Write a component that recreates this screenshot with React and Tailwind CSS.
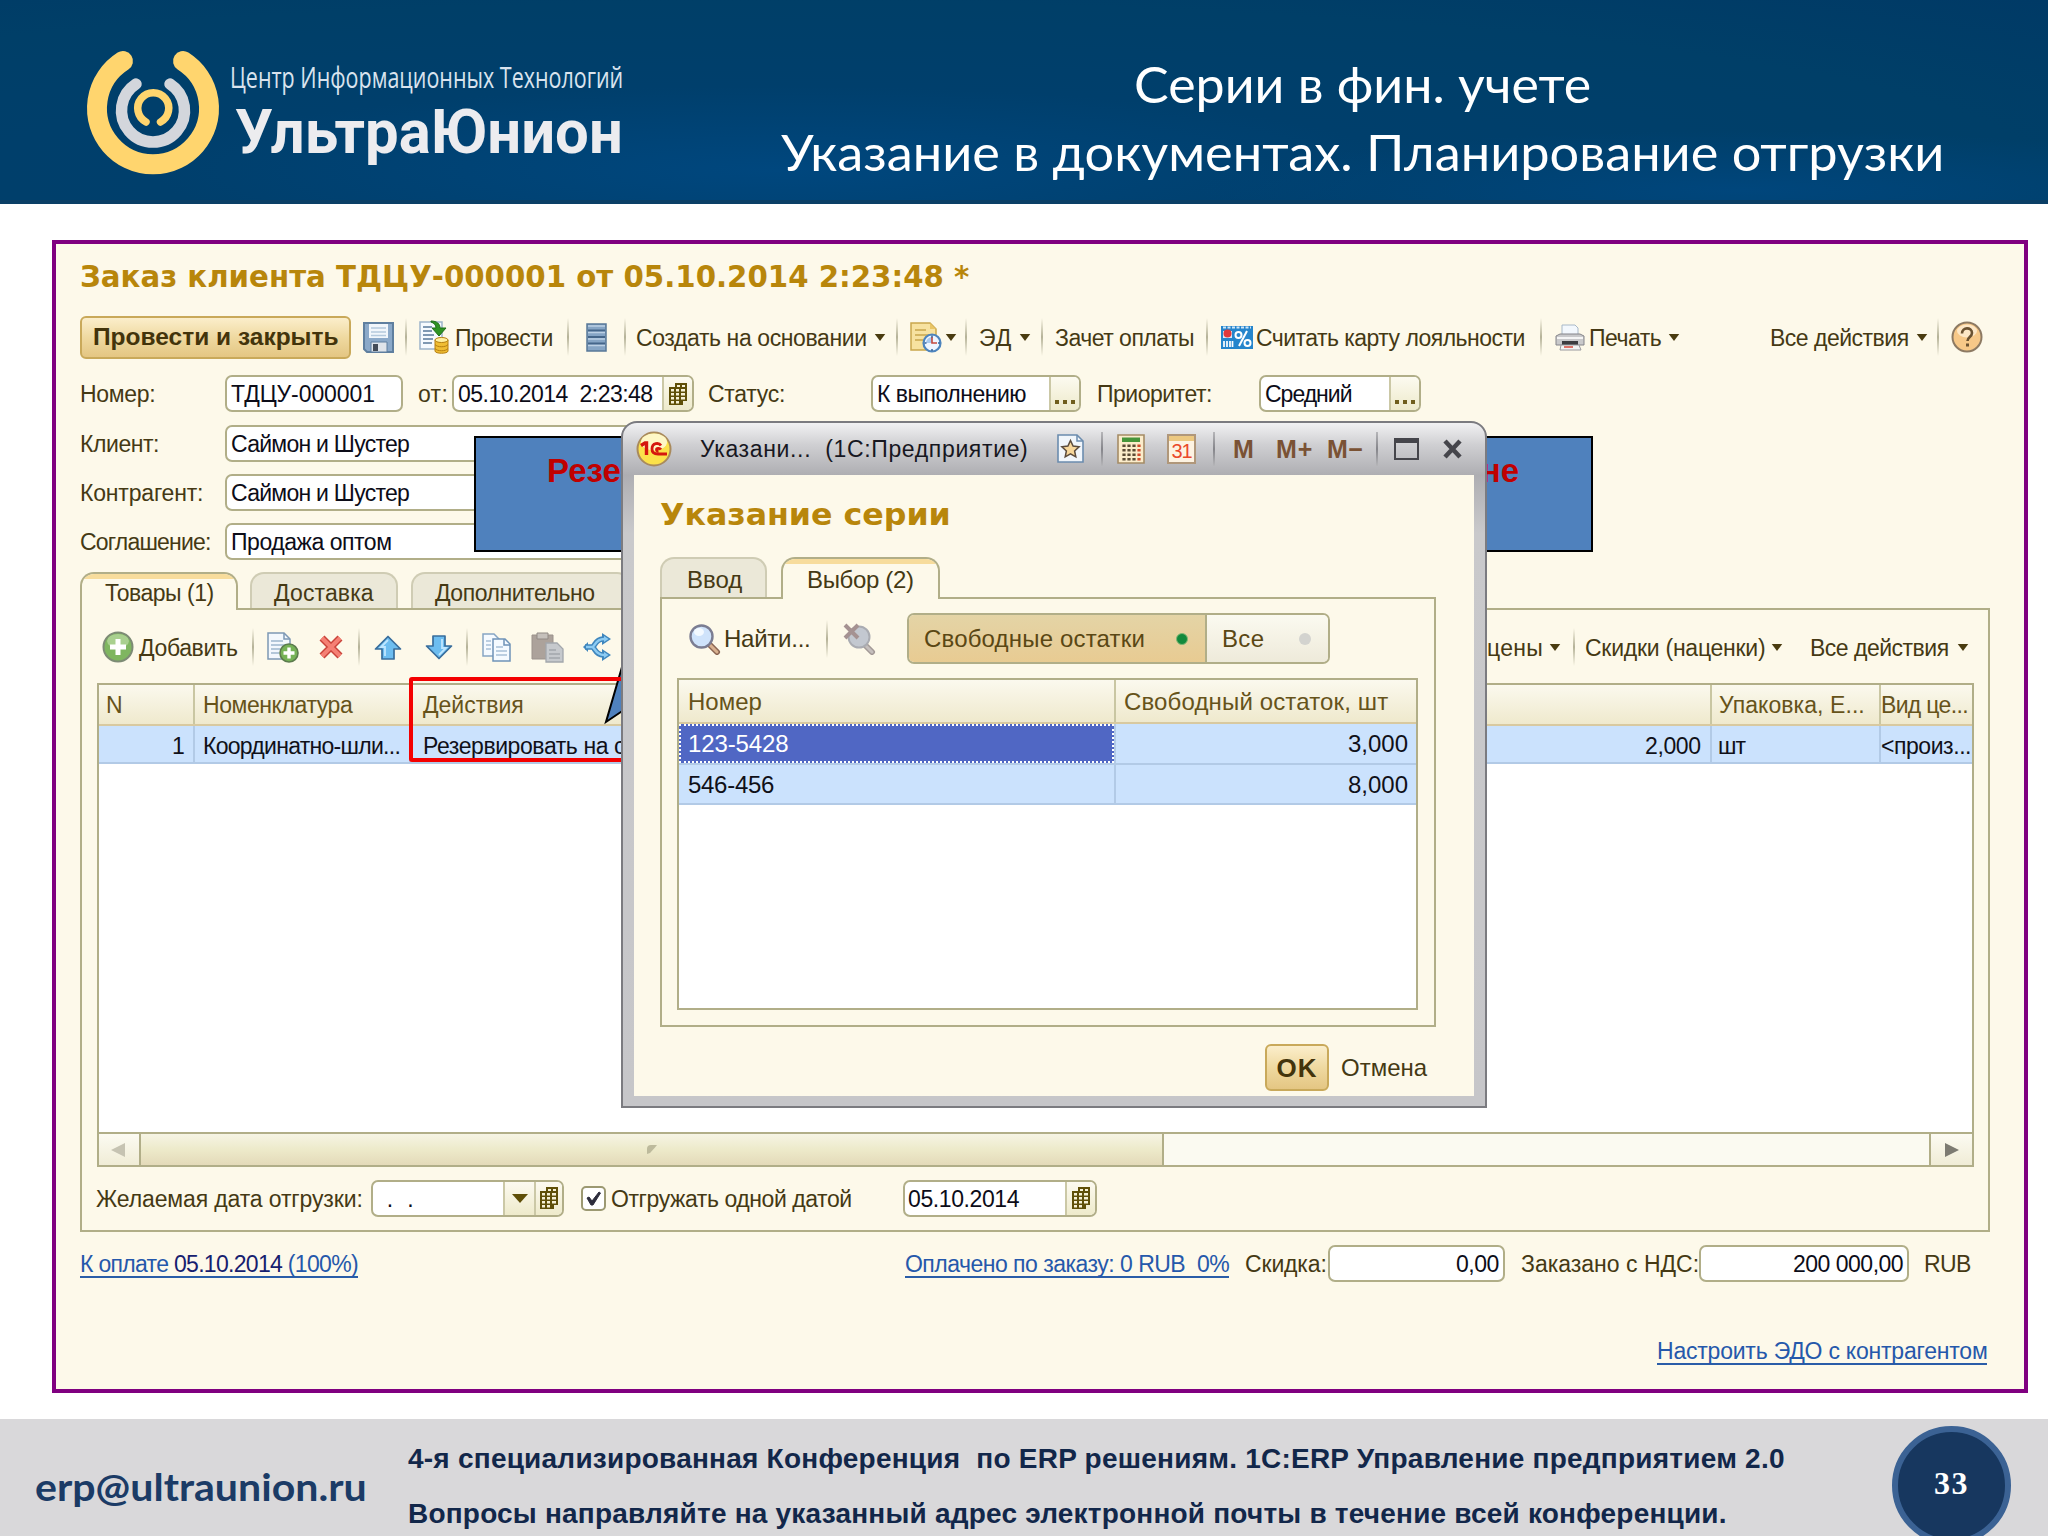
import { useLayoutEffect, useRef } from "react";

// One line of text that fills exactly `w` pixels, by tracking or by horizontal scaling
function T({ w, squeeze, className = "", children }) {
  const ref = useRef(null);

  useLayoutEffect(() => {
    const el = ref.current;
    el.style.letterSpacing = "0px";
    el.style.transform = "none";
    const natural = el.offsetWidth;
    if (squeeze) {
      el.style.transform = `scaleX(${w / natural})`;
    } else {
      el.style.letterSpacing = `${(w - natural) / el.textContent.length}px`;
    }
  }, [w, squeeze, children]);

  return (
    <span
      className={`block shrink-0 whitespace-pre ${squeeze ? "" : "pt-[1px]"} ${className}`}
      style={{ width: w }}
    >
      <span ref={ref} className="inline-block origin-left">
        {children}
      </span>
    </span>
  );
}

const Sep = ({ className = "" }) => (
  <span
    className={`block h-[38px] w-[2px] shrink-0 bg-gradient-to-b from-transparent via-[#b5b298] to-transparent ${className}`}
  />
);

const Caret = ({ className = "" }) => (
  <svg viewBox="0 0 12 8" className={`h-[7px] w-[12px] shrink-0 ${className}`}>
    <path d="M0 0h12L6 8z" fill="#4a3c10" />
  </svg>
);

const CalendarIcon = ({ className = "" }) => (
  <svg viewBox="0 0 20 24" className={`h-[24px] w-[20px] shrink-0 ${className}`}>
    <path d="M7 1h12v18h-4v4H1V5h6z" fill="#5f4f08" />
    <g fill="#f6f1d6">
      <path d="M9 3h3v2H9zM14 3h3v2h-3zM3 7h3v2.500H3zM8 7h3v2.500H8zM13 7h4v2.500h-4zM3 11h3v2.500H3zM8 11h3v2.500H8zM13 11h4v2.500h-4zM3 15h3v2.500H3zM8 15h3v2.500H8zM13 15h4v2.500h-4zM3 19h3v2.500H3zM8 19h3v2.500H8z" />
    </g>
  </svg>
);

function Field({ width, text, textW, button, right, indent = 4, className = "" }) {
  return (
    <div
      style={{ width }}
      className={`flex h-[37px] shrink-0 overflow-hidden rounded-[7px] border-2 border-[#b1ae88] bg-white text-[#0c0c18] ${className}`}
    >
      <div className={`flex flex-1 items-center ${right ? "justify-end pr-[4px]" : ""}`}>
        {!right && <span className="block shrink-0" style={{ width: indent }} />}
        <T w={textW}>{text}</T>
      </div>
      {button}
    </div>
  );
}

const FieldButton = ({ children, className = "w-[30px]" }) => (
  <div
    className={`flex shrink-0 items-center justify-center border-l-2 border-[#cbc8a6] bg-gradient-to-b from-[#fcfaf0] to-[#eeeacb] ${className}`}
  >
    {children}
  </div>
);

const Dots = () => (
  <span className="mt-[16px] flex gap-[4px]">
    <i className="block size-[4px] bg-[#6f5d1c]" />
    <i className="block size-[4px] bg-[#6f5d1c]" />
    <i className="block size-[4px] bg-[#6f5d1c]" />
  </span>
);

function Logo() {
  return (
    <svg viewBox="0 0 140 128" className="h-[128px] w-[140px] shrink-0" fill="none" strokeLinecap="round">
      <path d="M40 14A56 56 0 1 0 100 14" stroke="#ffd56e" strokeWidth="20" />
      <path d="M53 37A31.500 31.500 0 1 0 87 37" stroke="#d3d6dc" strokeWidth="11.500" />
      <path d="M63 75A15.500 15.500 0 1 1 77.500 75" stroke="#ffd56e" strokeWidth="7.500" />
    </svg>
  );
}

function Header() {
  return (
    <header className="flex h-[204px] shrink-0 border-b-4 border-[#0b3f66] bg-[radial-gradient(ellipse_at_85%_95%,#00467c_0%,#00467c00_22%),radial-gradient(ellipse_at_38%_85%,#00477e_0%,#003f6c_35%,#003f68_70%,#003a66_100%)]">
      <div className="ml-[83px] flex pt-[47px]">
        <Logo />
        <div className="ml-[7px] flex flex-col">
          <T w={393} squeeze className="mt-[9px] h-[42px] font-['Open_Sans','Noto_Sans',sans-serif] text-[30px] leading-[42px] text-[#d9e3ee]">
            Центр Информационных Технологий
          </T>
          <T w={388} squeeze className="ml-[5px] mt-[3px] h-[62px] font-['Roboto','Liberation_Sans',sans-serif] text-[62px] font-bold leading-[62px] text-[#ececef]">
            УльтраЮнион
          </T>
        </div>
      </div>
      <div className="ml-auto mr-[104px] flex flex-col items-center pt-[50px] font-['Lato','Open_Sans',sans-serif] text-[51px] leading-[68px] text-white">
        <T w={457} squeeze className="h-[68px]">Серии в фин. учете</T>
        <T w={1163} squeeze className="h-[68px]">Указание в документах. Планирование отгрузки</T>
      </div>
    </header>
  );
}

function SaveIcon() {
  return (
    <svg viewBox="0 0 31 31" className="ml-[12px] size-[31px] shrink-0">
      <path d="M1 1h29v29H4l-3-3z" fill="#8ba9c9" stroke="#5f7f9f" strokeWidth="2" />
      <path d="M6 2h19v14H6z" fill="#f1f6fb" />
      <path d="M8 6h15M8 10h15M8 13.500h15" stroke="#b4c9dd" strokeWidth="1.500" />
      <path d="M8 20h16v10H8z" fill="#dfe4ea" stroke="#5f7f9f" />
      <path d="M10 22h5v7h-5z" fill="#444c57" />
    </svg>
  );
}

function PostIcon() {
  return (
    <svg viewBox="0 0 31 34" className="ml-[12px] h-[34px] w-[31px] shrink-0">
      <path d="M1 2h22v27H1z" fill="#f6fafe" stroke="#9db4ca" strokeWidth="1.500" />
      <path d="M4 7h9M4 11h9M4 15h11M4 19h10M4 23h9" stroke="#7f98b2" strokeWidth="1.800" />
      <path d="M12 1c6 0 9 3 9 7h6l-7 8-7-8h4c0-3-2-5-5-6z" fill="#2f9423" stroke="#1f6e18" />
      <path d="M16 20v11c0 3 13 3 13 0V20z" fill="#f0bd33" stroke="#b67f10" />
      <ellipse cx="22.500" cy="20" rx="6.500" ry="2.500" fill="#fff0a0" stroke="#b67f10" />
      <path d="M16 24.500c2 3 11 3 13 0M16 28.500c2 3 11 3 13 0" stroke="#b67f10" fill="none" />
    </svg>
  );
}

function ListIcon() {
  return (
    <svg viewBox="0 0 21 29" className="ml-[17px] h-[29px] w-[21px] shrink-0">
      <path d="M1 1h19v27H1z" fill="#86a5c5" stroke="#587898" strokeWidth="1.500" />
      <path d="M2 7.500h17M2 14h17M2 20.500h17" stroke="#45668a" strokeWidth="1.800" />
      <path d="M2 3h17M2 9.500h17M2 16h17M2 22.500h17" stroke="#bcd0e4" strokeWidth="1.500" />
    </svg>
  );
}

function NoteClockIcon() {
  return (
    <svg viewBox="0 0 32 31" className="ml-[12px] h-[31px] w-[32px] shrink-0">
      <path d="M1 1h19l6 6v21H1z" fill="#f7e2a0" stroke="#c9a64c" strokeWidth="1.500" />
      <path d="M20 1v6h6z" fill="#e9c566" />
      <path d="M5 8h11M5 13h14M5 18h8" stroke="#c9a64c" strokeWidth="1.500" />
      <circle cx="22" cy="21" r="8.500" fill="#eef5ff" stroke="#4d84bd" strokeWidth="2.200" />
      <path d="M22 21V15a6 6 0 0 0-6 6z" fill="#a9c9ee" />
      <path d="M22 15v6h5" stroke="#c5493e" strokeWidth="1.600" fill="none" />
      <path d="M22 13.500v2M22 27v2M14.500 21h2M28 21h2" stroke="#31609a" strokeWidth="1.500" />
    </svg>
  );
}

function LoyaltyIcon() {
  return (
    <svg viewBox="0 0 32 23" className="ml-[13px] h-[23px] w-[32px] shrink-0">
      <path d="M0 0h32v23H0z" fill="#2585cc" />
      <path d="M2 1.500h28" stroke="#cfe6f8" strokeWidth="2" strokeDasharray="3 1.500" />
      <path d="M2 5h9v7H2z" fill="#dfeaf6" />
      <circle cx="6.500" cy="7.500" r="4" fill="#e0383b" />
      <path d="M3 15v6M6 15v6M9 15v6M11.500 15v6" stroke="#fff" strokeWidth="1.700" />
      <circle cx="17.500" cy="9" r="3" fill="none" stroke="#fff" strokeWidth="2" />
      <circle cx="26.500" cy="17" r="3" fill="none" stroke="#fff" strokeWidth="2" />
      <path d="M26 5l-8 15" stroke="#fff" strokeWidth="2" />
    </svg>
  );
}

function PrinterIcon() {
  return (
    <svg viewBox="0 0 30 27" className="ml-[13px] h-[27px] w-[30px] shrink-0">
      <path d="M7 1h13l3 3v9H7z" fill="#f3f8fd" stroke="#a8b8c8" />
      <path d="M1 12l4-2h20l4 2v9H1z" fill="#c9c9cb" stroke="#85858a" />
      <path d="M2 14h26" stroke="#f5f5f5" strokeWidth="2" />
      <path d="M7 17h16v4H7z" fill="#3c3c40" />
      <path d="M6 21h18l2 5H5z" fill="#f4f4f4" stroke="#9a9a9e" />
      <path d="M9 23h9" stroke="#d8483b" strokeWidth="1.500" />
    </svg>
  );
}

function MainToolbar() {
  return (
    <div className="flex h-[58px] items-center text-[#453914]">
      <div className="flex h-[43px] w-[271px] shrink-0 items-center rounded-[6px] border-2 border-[#c9a95a] bg-gradient-to-b from-[#fbeecb] via-[#efd9a0] to-[#e4c683] text-[#43340b]">
        <T w={246} squeeze className="ml-[11px] font-bold">Провести и закрыть</T>
      </div>
      <SaveIcon />
      <Sep className="ml-[11px]" />
      <PostIcon />
      <T w={98} className="ml-[5px]">Провести</T>
      <Sep className="ml-[14px]" />
      <ListIcon />
      <Sep className="ml-[17px]" />
      <T w={231} className="ml-[10px]">Создать на основании</T>
      <Caret className="ml-[7px]" />
      <Sep className="ml-[10px]" />
      <NoteClockIcon />
      <Caret className="ml-[3px]" />
      <Sep className="ml-[8px]" />
      <T w={33} className="ml-[12px]">ЭД</T>
      <Caret className="ml-[7px]" />
      <Sep className="ml-[10px]" />
      <T w={139} className="ml-[12px]">Зачет оплаты</T>
      <Sep className="ml-[12px]" />
      <LoyaltyIcon />
      <T w={269} className="ml-[3px]">Считать карту лояльности</T>
      <Sep className="ml-[15px]" />
      <PrinterIcon />
      <T w={72} className="ml-[4px]">Печать</T>
      <Caret className="ml-[7px]" />
      <T w={139} className="ml-auto">Все действия</T>
      <Caret className="ml-[7px]" />
      <Sep className="ml-[9px]" />
      <svg viewBox="0 0 32 32" className="ml-[12px] mr-[24px] size-[32px] shrink-0">
        <circle cx="16" cy="16" r="14.500" fill="#f7c888" stroke="#8d7a63" strokeWidth="2" />
        <ellipse cx="16" cy="10" rx="10" ry="6.500" fill="#fde7c6" />
        <path d="M11 12.500c0-7 10-6.500 10-.5 0 4-4.500 4-4.500 8" stroke="#6b5231" strokeWidth="2.600" fill="none" />
        <path d="M15 22.500h3v3h-3z" fill="#6b5231" />
      </svg>
    </div>
  );
}

function FormRows() {
  const rows = [
    { label: "Клиент:", w: 79, value: "Саймон и Шустер", vw: 178 },
    { label: "Контрагент:", w: 123, value: "Саймон и Шустер", vw: 178 },
    { label: "Соглашение:", w: 130, value: "Продажа оптом", vw: 161 },
  ];

  return (
    <div className="mt-[3px] text-[#453914]">
      <div className="flex h-[49px] items-center">
        <div className="w-[145px] shrink-0">
          <T w={75}>Номер:</T>
        </div>
        <Field width={178} text="ТДЦУ-000001" textW={144} />
        <T w={30} className="ml-[15px]">от:</T>
        <Field
          width={242}
          text="05.10.2014  2:23:48"
          textW={195}
          className="ml-[4px]"
          button={<FieldButton><CalendarIcon /></FieldButton>}
        />
        <T w={77} className="ml-[14px]">Статус:</T>
        <Field
          width={210}
          text="К выполнению"
          textW={149}
          className="ml-[86px]"
          button={<FieldButton><Dots /></FieldButton>}
        />
        <T w={115} className="ml-[16px]">Приоритет:</T>
        <Field
          width={162}
          text="Средний"
          textW={87}
          className="ml-[47px]"
          button={<FieldButton><Dots /></FieldButton>}
        />
      </div>
      {rows.map((row) => (
        <div key={row.label} className="flex h-[49px] items-center pt-[1px]">
          <div className="w-[145px] shrink-0">
            <T w={row.w}>{row.label}</T>
          </div>
          <Field width={1195} text={row.value} textW={row.vw} />
        </div>
      ))}
    </div>
  );
}

function Tab({ active, width, textW, pad, className = "", children }) {
  return (
    <div
      style={{ width, paddingLeft: pad }}
      className={`relative flex shrink-0 items-center overflow-hidden rounded-t-[14px] border-2 border-b-0 ${
        active
          ? "z-10 border-[#b1ae88] bg-[#fdf9ea] text-[#453914]"
          : "mb-[2px] border-[#cfccb4] bg-[#ebe8d8] pt-[2px] text-[#453914]"
      } ${className}`}
    >
      {active && <span className="absolute inset-x-0 top-0 h-[5px] bg-[#f7dc9c]" />}
      <T w={textW}>{children}</T>
    </div>
  );
}

function AddIcon() {
  return (
    <svg viewBox="0 0 32 32" className="size-[32px] shrink-0">
      <circle cx="16" cy="16" r="14.500" fill="#7fb660" stroke="#7d8b75" strokeWidth="2" />
      <ellipse cx="16" cy="10" rx="11" ry="7" fill="#a9d08f" />
      <path d="M16 8v16M8 16h16" stroke="#fff" strokeWidth="5" />
    </svg>
  );
}

function DocAddIcon() {
  return (
    <svg viewBox="0 0 32 31" className="ml-[13px] h-[31px] w-[32px] shrink-0">
      <path d="M1 1h16l6 6v20H1z" fill="#f3f8fd" stroke="#7d98b4" strokeWidth="1.500" />
      <path d="M17 1v6h6" fill="none" stroke="#7d98b4" strokeWidth="1.500" />
      <path d="M4 9h12M4 13h14M4 17h9M4 21h8" stroke="#9fb6cd" strokeWidth="1.600" />
      <circle cx="22" cy="21" r="9" fill="#76b257" stroke="#5b7b4d" strokeWidth="1.600" />
      <path d="M22 15.500v11M16.500 21h11" stroke="#fff" strokeWidth="3.400" />
    </svg>
  );
}

function ArrowIcon({ down, className }) {
  return (
    <svg viewBox="0 0 28 25" className={`h-[25px] w-[28px] shrink-0 ${down ? "rotate-180" : ""} ${className}`}>
      <path d="M14 1.500L26.500 14H20v10H8V14H1.500z" fill="#6dbdf0" stroke="#386d9c" strokeWidth="1.700" strokeLinejoin="round" />
      <path d="M14 5l-7 7h4v9" fill="none" stroke="#bfe6ff" strokeWidth="1.800" />
    </svg>
  );
}

function CopyIcon() {
  return (
    <svg viewBox="0 0 29 29" className="ml-[14px] size-[29px] shrink-0">
      <path d="M1 1h11l5 5v17H1z" fill="#f5faff" stroke="#86a5c4" strokeWidth="1.500" />
      <path d="M4 8h5M4 12h5M4 16h5" stroke="#a8c0d8" strokeWidth="1.500" />
      <path d="M11 6h12l5 5v17H11z" fill="#f5faff" stroke="#6f93b8" strokeWidth="1.500" />
      <path d="M22 6v6h6" fill="none" stroke="#6f93b8" strokeWidth="1.500" />
      <path d="M14 14h7M14 18h11M14 22h11" stroke="#a8c0d8" strokeWidth="1.600" />
    </svg>
  );
}

function PasteIcon() {
  return (
    <svg viewBox="0 0 33 31" className="ml-[20px] h-[31px] w-[33px] shrink-0">
      <path d="M1 3h21v24H1z" fill="#aca29b" stroke="#9b928c" />
      <path d="M6 1h11v6H6z" fill="#c5c0bb" stroke="#918a85" />
      <path d="M15 11h11l6 6v13H15z" fill="#c6c9cd" stroke="#a3a7ac" strokeWidth="1.300" />
      <path d="M18 18h7M18 22h11M18 26h11" stroke="#a3a7ac" strokeWidth="1.500" />
    </svg>
  );
}

function ShareIcon() {
  return (
    <svg viewBox="0 0 29 28" className="ml-[19px] h-[28px] w-[29px] shrink-0" fill="none">
      <path d="M2 14h7C12 14 12 6 20 6M9 14c3 0 3 8 11 8" stroke="#3f86bd" strokeWidth="5.500" />
      <path d="M19 0l9 6-9 6zM19 16l9 6-9 6zM0 14l5-5v10z" fill="#3f86bd" />
      <path d="M3 14h6C12 14 12 6 21 6M9 14c3 0 3 8 12 8" stroke="#8ccbf3" strokeWidth="2.500" />
      <path d="M21 3l4.500 3L21 9zM21 19l4.500 3-4.500 3z" fill="#8ccbf3" />
    </svg>
  );
}

function GoodsToolbar() {
  return (
    <div className="flex h-[73px] items-center pl-[20px] pt-[1px] text-[#453914]">
      <AddIcon />
      <T w={99} className="ml-[5px]">Добавить</T>
      <Sep className="ml-[14px]" />
      <DocAddIcon />
      <svg viewBox="0 0 24 24" className="ml-[20px] size-[24px] shrink-0">
        <path d="M3 3l18 18M21 3L3 21" stroke="#c9433a" strokeWidth="7" />
        <path d="M3 3l18 18M21 3L3 21" stroke="#f58074" strokeWidth="4" />
      </svg>
      <Sep className="ml-[15px]" />
      <ArrowIcon className="ml-[14px]" />
      <ArrowIcon down className="ml-[23px]" />
      <Sep className="ml-[13px]" />
      <CopyIcon />
      <PasteIcon />
      <ShareIcon />
      <div className="ml-auto mr-[19px] flex items-center">
        <T w={56}>цены</T>
        <Caret className="ml-[6px]" />
        <Sep className="ml-[12px]" />
        <T w={180} className="ml-[10px]">Скидки (наценки)</T>
        <Caret className="ml-[6px]" />
        <T w={139} className="ml-[27px]">Все действия</T>
        <Caret className="ml-[8px]" />
      </div>
    </div>
  );
}

const headCell = "flex items-center border-r-2 border-[#c9c6a2] last:border-r-0 overflow-hidden shrink-0";
const bodyCell = "flex items-center border-r-2 border-[#b2cae6] last:border-r-0 overflow-hidden shrink-0";

function GoodsTable() {
  return (
    <div className="ml-[15px] flex h-[484px] w-[1877px] flex-col border-2 border-[#b1ae88] bg-white">
      <div className="flex h-[41px] border-b-2 border-[#d8c9a0] bg-gradient-to-b from-[#fbf9ee] to-[#efe9cd] text-[#66531a]">
        <div className={`w-[96px] pl-[7px] ${headCell}`}><T w={16}>N</T></div>
        <div className={`w-[216px] pl-[8px] ${headCell}`}><T w={149}>Номенклатура</T></div>
        <div className={`w-[1301px] pl-[12px] ${headCell}`}><T w={101}>Действия</T></div>
        <div className={`w-[169px] pl-[7px] ${headCell}`}><T w={146}>Упаковка, Е...</T></div>
        <div className={`flex-1 ${headCell}`}><T w={87}>Вид це...</T></div>
      </div>
      <div className="flex h-[38px] border-b-2 border-[#b2cae6] bg-[#cbe2fd] text-[#101018]">
        <div className={`w-[96px] justify-end pr-[8px] pt-[2px] ${bodyCell}`}><T w={13}>1</T></div>
        <div className={`w-[216px] pl-[8px] pt-[2px] ${bodyCell}`}><T w={197}>Координатно-шли...</T></div>
        <div className={`w-[1301px] justify-between pl-[12px] pr-[9px] pt-[2px] ${bodyCell}`}>
          <T w={212}>Резервировать на ск</T>
          <T w={56}>2,000</T>
        </div>
        <div className={`w-[169px] pl-[6px] pt-[2px] ${bodyCell}`}><T w={27}>шт</T></div>
        <div className={`flex-1 pt-[2px] ${bodyCell}`}><T w={90}>{"<произ..."}</T></div>
      </div>
      <div className="mt-auto flex h-[33px] border-t-2 border-[#b1ae88] bg-[#fbfaf1]">
        <div className="flex w-[42px] items-center justify-center border-r-2 border-[#b1ae88] bg-gradient-to-b from-[#fcfbf2] to-[#f0ecd6] pr-[3px]">
          <svg viewBox="0 0 14 14" className="size-[14px]"><path d="M14 0v14L0 7z" fill="#c6c3b2" /></svg>
        </div>
        <div className="flex w-[1023px] items-center justify-center border-r-2 border-[#b1ae88] bg-gradient-to-b from-[#f6f4e4] via-[#edeaca] to-[#e4dab9]">
          <svg viewBox="0 0 10 10" className="size-[10px]">
            <path d="M0 9V4a4 4 0 0 1 4-4h6L8 2.500 3 8z" fill="#bdba9c" />
          </svg>
        </div>
        <div className="flex-1" />
        <div className="flex w-[43px] items-center justify-center border-l-2 border-[#b1ae88] bg-gradient-to-b from-[#fcfbf2] to-[#f0ecd6]">
          <svg viewBox="0 0 14 14" className="size-[14px]"><path d="M0 0v14l14-7z" fill="#7d7b72" /></svg>
        </div>
      </div>
    </div>
  );
}

function ShippingRow() {
  return (
    <div className="flex h-[62px] items-center pl-[14px] text-[#453914]">
      <T w={267}>Желаемая дата отгрузки:</T>
      <Field
        width={193}
        text=" .  ."
        textW={34}
        indent={7}
        className="ml-[8px]"
        button={
          <>
            <FieldButton className="w-[31px]">
              <svg viewBox="0 0 16 9" className="h-[9px] w-[16px]"><path d="M0 0h16L8 9z" fill="#5f4f08" /></svg>
            </FieldButton>
            <FieldButton className="w-[28px]"><CalendarIcon /></FieldButton>
          </>
        }
      />
      <svg viewBox="0 0 25 25" className="ml-[17px] size-[25px] shrink-0">
        <rect x="1" y="1" width="23" height="23" rx="4" fill="#fff" stroke="#9c9972" strokeWidth="2" />
        <path d="M6 12l2-1 3 4 7-9 1.500 1L12 19h-2z" fill="#2c2c3c" stroke="#2c2c3c" />
      </svg>
      <T w={241} className="ml-[5px]">Отгружать одной датой</T>
      <Field
        width={194}
        text="05.10.2014"
        textW={111}
        indent={3}
        className="ml-[51px]"
        button={<FieldButton className="w-[30px]"><CalendarIcon /></FieldButton>}
      />
    </div>
  );
}

const Link = ({ w, className = "", children }) => (
  <a className={`block h-[28px] shrink-0 border-b-2 border-[#2a5da8] leading-[26px] text-[#2558ab] ${className}`}>
    <T w={w}>{children}</T>
  </a>
);

function Totals() {
  return (
    <div className="flex h-[62px] items-center pt-[1px] text-[#453914]">
      <Link w={278}>
        К оплате <span className="text-[#16206f]">05.10.2014</span> (100%)
      </Link>
      <Link w={324} className="ml-[547px]">Оплачено по заказу: 0 RUB  0%</Link>
      <T w={82} className="ml-[16px]">Скидка:</T>
      <Field width={177} text="0,00" textW={43} right className="ml-[1px]" />
      <T w={178} className="ml-[16px]">Заказано с НДС:</T>
      <Field width={210} text="200 000,00" textW={110} right />
      <T w={47} className="ml-[15px]">RUB</T>
    </div>
  );
}

function OrderForm() {
  return (
    <section className="ml-[52px] mt-[36px] flex h-[1153px] w-[1976px] shrink-0 flex-col border-4 border-[#800080] bg-[#fdf9ea] pl-[24px] pr-[17px]">
      <div className="flex h-[64px] items-center">
        <T w={889} squeeze className="font-['DejaVu_Sans',sans-serif] text-[31px] font-bold text-[#b8860b]">
          Заказ клиента ТДЦУ-000001 от 05.10.2014 2:23:48 *
        </T>
      </div>
      <MainToolbar />
      <FormRows />
      <div className="mt-[7px] flex h-[38px]">
        <Tab active width={158} pad={23} textW={109}>Товары (1)</Tab>
        <Tab width={148} pad={22} textW={100} className="ml-[12px]">Доставка</Tab>
        <Tab width={220} pad={22} textW={160} className="ml-[13px]">Дополнительно</Tab>
      </div>
      <div className="-mt-[2px] h-[624px] w-[1910px] border-2 border-[#b1ae88]">
        <GoodsToolbar />
        <GoodsTable />
        <ShippingRow />
      </div>
      <Totals />
      <div className="mt-[37px] flex h-[40px] items-center">
        <Link w={330} className="ml-auto mr-[20px]">Настроить ЭДО с контрагентом</Link>
      </div>
    </section>
  );
}

function Callout() {
  return (
    <>
      <div className="absolute left-[474px] top-[436px] flex h-[116px] w-[1119px] justify-between border-2 border-black bg-[#4f81bd] pl-[71px] pr-[72px] pt-[14px] text-[33px] font-bold leading-[38px] text-[#c00000]">
        <span>Резе</span>
        <span>не</span>
      </div>
      <svg viewBox="0 0 60 60" className="absolute left-[602px] top-[667px] size-[60px]">
        <path d="M20 0L4 55L50 24" fill="#4f81bd" stroke="#000" strokeWidth="2" />
      </svg>
      <div className="absolute left-[409px] top-[677px] h-[85px] w-[240px] rounded-[3px] border-4 border-[#f40000]" />
    </>
  );
}

const TitleSep = ({ className = "" }) => (
  <span className={`block h-[34px] w-[2px] shrink-0 bg-gradient-to-b from-[#b6b6b9] via-[#85858a] to-[#b6b6b9] ${className}`} />
);

function DialogTitle() {
  return (
    <div className="flex h-[52px] shrink-0 items-center pb-[1px] pl-[13px] text-[23px] text-[#17171f]">
      <svg viewBox="0 0 36 36" className="size-[36px] shrink-0">
        <circle cx="18" cy="18" r="16.500" fill="#fbe14a" stroke="#a98a5c" strokeWidth="2" />
        <ellipse cx="18" cy="11" rx="13" ry="8.500" fill="#fef7c6" />
        <path d="M5 14.500l4-2.500h1.500v12" fill="none" stroke="#d5170e" strokeWidth="3.400" />
        <path d="M25 14.500c-2-3-9-3-9 3.500 0 4 3 5 6 5h9M25 18.500c-1.500-2-4.500-1-4.500 0 0 1 1 1.500 2 1.500" fill="none" stroke="#d5170e" strokeWidth="2.800" />
      </svg>
      <T w={328} className="ml-[28px]">{"Указани...  (1С:Предприятие)"}</T>
      <svg viewBox="0 0 27 29" className="ml-[29px] h-[29px] w-[27px] shrink-0">
        <path d="M1 1h19l6 6v21H1z" fill="#f1f6fb" stroke="#6b8cae" strokeWidth="1.600" />
        <path d="M20 1v6h6" fill="none" stroke="#6b8cae" strokeWidth="1.500" />
        <path d="M13.500 6.500l2.600 5.600 6 .7-4.500 4.100 1.200 6-5.300-3-5.300 3 1.200-6-4.500-4.100 6-.7z" fill="#f7d79b" stroke="#5b4b3c" strokeWidth="1.500" />
      </svg>
      <TitleSep className="ml-[17px]" />
      <svg viewBox="0 0 28 30" className="ml-[14px] h-[30px] w-[28px] shrink-0">
        <path d="M1 1h26v28H1z" fill="#fbeccb" stroke="#a58c66" strokeWidth="1.600" />
        <path d="M5 3.500h18v4.500H5z" fill="#46953a" />
        <path d="M7 10.500v16M12 10.500v16M17 10.500v16" stroke="#5a4a35" strokeWidth="3.200" strokeDasharray="2.500 2" />
        <path d="M22 10.500v16" stroke="#cf4a2c" strokeWidth="3.200" strokeDasharray="2.500 2" />
      </svg>
      <div className="ml-[22px] flex h-[30px] w-[29px] shrink-0 flex-col items-center border-2 border-[#b0977a] bg-[#fdf3e2]">
        <span className="h-[6px] w-full bg-[#ecc880]" />
        <span className="text-[20px] leading-[21px] tracking-[-1px] text-[#ea4a2a]">31</span>
      </div>
      <TitleSep className="ml-[17px]" />
      <div className="flex items-center text-[25px] font-bold text-[#7a5234]">
        <T w={21} className="ml-[18px]">M</T>
        <T w={37} className="ml-[22px]">M+</T>
        <T w={36} className="ml-[14px]">M−</T>
      </div>
      <TitleSep className="ml-[13px]" />
      <span className="ml-[16px] block h-[22px] w-[25px] shrink-0 border-2 border-t-[5px] border-[#45454b]" />
      <svg viewBox="0 0 21 20" className="ml-[23px] h-[20px] w-[21px] shrink-0">
        <path d="M3 2l15 16M18 2L3 18" stroke="#45454b" strokeWidth="4.500" />
      </svg>
    </div>
  );
}

function FindIcon({ cleared, className = "" }) {
  return (
    <svg viewBox="0 0 33 32" className={`h-[32px] w-[33px] shrink-0 ${className}`}>
      <path d="M22 22l7 7" stroke={cleared ? "#a39a97" : "#8b6552"} strokeWidth="6" strokeLinecap="round" />
      <path d="M22 22l7 7" stroke={cleared ? "#c5bfbd" : "#d9b190"} strokeWidth="3" strokeLinecap="round" />
      {cleared ? (
        <>
          <circle cx="16" cy="14" r="10.500" fill="#c3c8d0" stroke="#aaacb2" strokeWidth="2" />
          <path d="M2 2l13 13M15 2L2 15" stroke="#a59292" strokeWidth="4" />
        </>
      ) : (
        <>
          <circle cx="13.500" cy="13.500" r="11" fill="#cfe3fb" stroke="#7b7d92" strokeWidth="2.400" />
          <ellipse cx="11" cy="9" rx="5" ry="4" fill="#f3f9ff" />
        </>
      )}
    </svg>
  );
}

function SeriesTable() {
  return (
    <div className="ml-[15px] h-[332px] w-[741px] border-2 border-[#b1ae88] bg-white">
      <div className="flex h-[44px] border-b-2 border-[#d8c9a0] bg-gradient-to-b from-[#fbf9ee] to-[#efe9cd] text-[#66531a]">
        <div className={`w-[437px] pl-[9px] ${headCell}`}><T w={74}>Номер</T></div>
        <div className={`flex-1 pl-[8px] ${headCell}`}><T w={264}>Свободный остаток, шт</T></div>
      </div>
      <div className="flex h-[41px] border-b-2 border-[#b2cae6] bg-[#cbe2fd] text-[#101018]">
        <div className="flex w-[435px] shrink-0 items-center border-2 border-dotted border-white bg-[#5067c4] bg-clip-border pl-[7px] text-white">
          <T w={100}>123-5428</T>
        </div>
        <div className="flex flex-1 items-center justify-end border-l-2 border-[#b2cae6] pr-[8px]"><T w={60}>3,000</T></div>
      </div>
      <div className="flex h-[40px] border-b-2 border-[#b2cae6] bg-[#cbe2fd] text-[#101018]">
        <div className="flex w-[435px] shrink-0 items-center pl-[9px]"><T w={86}>546-456</T></div>
        <div className="flex flex-1 items-center justify-end border-l-2 border-[#b2cae6] pr-[8px]"><T w={60}>8,000</T></div>
      </div>
    </div>
  );
}

function Dialog() {
  return (
    <div className="absolute left-[621px] top-[421px] flex h-[687px] w-[866px] flex-col rounded-t-[16px] border-2 border-[#7b7b80] bg-[#c6c6c9] bg-[linear-gradient(to_bottom,#f1f1f3_0px,#cfcfd2_22px,#aeaeb2_52px,#c9c9cb_110px,#c6c6c9_100%)]">
      <DialogTitle />
      <div className="ml-[11px] flex h-[621px] w-[840px] flex-col bg-[#fdf9ea] pl-[26px] text-[24px]">
        <div className="flex h-[82px] shrink-0 items-center pb-[5px]">
          <T w={291} squeeze className="font-['DejaVu_Sans',sans-serif] text-[31px] font-bold text-[#b8860b]">
            Указание серии
          </T>
        </div>
        <div className="flex h-[42px] shrink-0 text-[#453914]">
          <Tab width={107} pad={25} textW={55}>Ввод</Tab>
          <Tab active width={159} pad={24} textW={107} className="ml-[14px]">Выбор (2)</Tab>
        </div>
        <div className="-mt-[2px] h-[430px] w-[776px] shrink-0 border-2 border-[#b1ae88]">
          <div className="flex h-[79px] items-center text-[#453914]">
            <FindIcon className="ml-[26px]" />
            <T w={87} className="ml-[3px]">Найти...</T>
            <Sep className="ml-[15px]" />
            <FindIcon cleared className="ml-[15px]" />
            <div className="ml-[31px] flex h-[51px] w-[423px] shrink-0 overflow-hidden rounded-[7px] border-2 border-[#b1ae88] text-[#5a4714]">
              <div className="flex w-[298px] items-center border-r-2 border-[#b1ae88] bg-gradient-to-b from-[#e4d4a6] to-[#e8cb92]">
                <T w={221} className="ml-[15px]">Свободные остатки</T>
                <span className="ml-[31px] block size-[12px] rounded-full border border-[#7fb774] bg-[#128a3c]" />
              </div>
              <div className="flex flex-1 items-center bg-gradient-to-b from-[#fbfaf0] to-[#eeeada]">
                <T w={42} className="ml-[15px]">Все</T>
                <span className="ml-[35px] block size-[12px] rounded-full bg-[#d3d3cf]" />
              </div>
            </div>
          </div>
          <SeriesTable />
        </div>
        <div className="flex h-[69px] shrink-0 items-center pr-[47px] pt-[12px] text-[#453914]">
          <div className="ml-auto flex h-[47px] w-[64px] items-center justify-center rounded-[6px] border-2 border-[#c9a95a] bg-gradient-to-b from-[#fbeecb] via-[#efd9a0] to-[#e4c683] text-[26px] font-bold text-[#43340b]">
            <T w={41}>OK</T>
          </div>
          <T w={86} className="ml-[12px]">Отмена</T>
        </div>
      </div>
    </div>
  );
}

function Footer() {
  return (
    <footer className="mt-[26px] flex h-[117px] shrink-0 overflow-hidden bg-[#d9d8da]">
      <T w={332} squeeze className="ml-[35px] mt-[43px] h-[48px] font-['Lato','Open_Sans',sans-serif] text-[38px] font-bold leading-[48px] text-[#1b3b66]">
        erp@ultraunion.ru
      </T>
      <div className="ml-[41px] flex flex-col pt-[12px] text-[28px] font-bold leading-[54px] text-[#12274a]">
        <T w={1377} className="h-[55px]">
          {"4-я специализированная Конференция  по ERP решениям. 1С:ERP Управление предприятием 2.0"}
        </T>
        <T w={1319} className="h-[54px]">
          Вопросы направляйте на указанный адрес электронной почты в течение всей конференции.
        </T>
      </div>
      <div className="ml-auto mr-[37px] mt-[7px] flex size-[119px] shrink-0 items-center justify-center rounded-full border-[6px] border-[#3b6294] bg-[#17375f] pb-[6px] font-['Liberation_Serif',serif] text-[32px] font-bold text-white">
        <T w={35}>33</T>
      </div>
    </footer>
  );
}

export default function App() {
  return (
    <div className="relative flex h-[1536px] w-[2048px] flex-col overflow-hidden bg-white font-['Liberation_Sans',Arial,sans-serif] text-[23px] leading-[28px]">
      <Header />
      <OrderForm />
      <Callout />
      <Dialog />
      <Footer />
    </div>
  );
}
